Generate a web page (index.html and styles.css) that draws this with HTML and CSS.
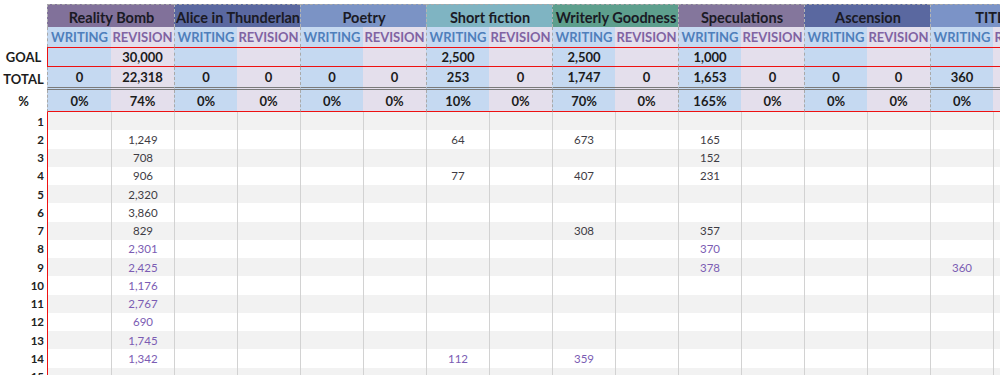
FILE: index.html
```html
<!DOCTYPE html>
<html>
<head>
<meta charset="utf-8">
<link rel="stylesheet" href="styles.css">
</head>
<body>
<div class="sheet">
  <div class="row hdr">
    <div class="lb"></div>
    <div class="c grp p-rb">Reality Bomb</div>
    <div class="c grp p-al">Alice in Thunderland</div>
    <div class="c grp p-po">Poetry</div>
    <div class="c grp p-sf">Short fiction</div>
    <div class="c grp p-wg">Writerly Goodness</div>
    <div class="c grp p-sp">Speculations</div>
    <div class="c grp p-as">Ascension</div>
    <div class="c grp p-ti">TITLE</div>
  </div>
  <div class="row sub">
    <div class="lb"></div>
    <div class="c w">WRITING</div><div class="c r">REVISION</div>
    <div class="c w">WRITING</div><div class="c r">REVISION</div>
    <div class="c w">WRITING</div><div class="c r">REVISION</div>
    <div class="c w">WRITING</div><div class="c r">REVISION</div>
    <div class="c w">WRITING</div><div class="c r">REVISION</div>
    <div class="c w">WRITING</div><div class="c r">REVISION</div>
    <div class="c w">WRITING</div><div class="c r">REVISION</div>
    <div class="c w">WRITING</div><div class="c r">REVISION</div>
  </div>
  <div class="row goal">
    <div class="lb">GOAL</div>
    <div class="c w"></div><div class="c r">30,000</div>
    <div class="c w"></div><div class="c r"></div>
    <div class="c w"></div><div class="c r"></div>
    <div class="c w">2,500</div><div class="c r"></div>
    <div class="c w">2,500</div><div class="c r"></div>
    <div class="c w">1,000</div><div class="c r"></div>
    <div class="c w"></div><div class="c r"></div>
    <div class="c w"></div><div class="c r"></div>
  </div>
  <div class="row total">
    <div class="lb">TOTAL</div>
    <div class="c w">0</div><div class="c r">22,318</div>
    <div class="c w">0</div><div class="c r">0</div>
    <div class="c w">0</div><div class="c r">0</div>
    <div class="c w">253</div><div class="c r">0</div>
    <div class="c w">1,747</div><div class="c r">0</div>
    <div class="c w">1,653</div><div class="c r">0</div>
    <div class="c w">0</div><div class="c r">0</div>
    <div class="c w">360</div><div class="c r">0</div>
  </div>
  <div class="row pct">
    <div class="lb">%</div>
    <div class="c w">0%</div><div class="c r">74%</div>
    <div class="c w">0%</div><div class="c r">0%</div>
    <div class="c w">0%</div><div class="c r">0%</div>
    <div class="c w">10%</div><div class="c r">0%</div>
    <div class="c w">70%</div><div class="c r">0%</div>
    <div class="c w">165%</div><div class="c r">0%</div>
    <div class="c w">0%</div><div class="c r">0%</div>
    <div class="c w">0%</div><div class="c r">0%</div>
  </div>

  <div class="body">
    <div class="row br">
      <div class="lb">1</div>
      <div class="c"></div><div class="c"></div><div class="c"></div><div class="c"></div><div class="c"></div><div class="c"></div><div class="c"></div><div class="c"></div>
      <div class="c"></div><div class="c"></div><div class="c"></div><div class="c"></div><div class="c"></div><div class="c"></div><div class="c"></div><div class="c"></div>
    </div>
    <div class="row br">
      <div class="lb">2</div>
      <div class="c"></div><div class="c">1,249</div><div class="c"></div><div class="c"></div><div class="c"></div><div class="c"></div><div class="c">64</div><div class="c"></div>
      <div class="c">673</div><div class="c"></div><div class="c">165</div><div class="c"></div><div class="c"></div><div class="c"></div><div class="c"></div><div class="c"></div>
    </div>
    <div class="row br">
      <div class="lb">3</div>
      <div class="c"></div><div class="c">708</div><div class="c"></div><div class="c"></div><div class="c"></div><div class="c"></div><div class="c"></div><div class="c"></div>
      <div class="c"></div><div class="c"></div><div class="c">152</div><div class="c"></div><div class="c"></div><div class="c"></div><div class="c"></div><div class="c"></div>
    </div>
    <div class="row br">
      <div class="lb">4</div>
      <div class="c"></div><div class="c">906</div><div class="c"></div><div class="c"></div><div class="c"></div><div class="c"></div><div class="c">77</div><div class="c"></div>
      <div class="c">407</div><div class="c"></div><div class="c">231</div><div class="c"></div><div class="c"></div><div class="c"></div><div class="c"></div><div class="c"></div>
    </div>
    <div class="row br">
      <div class="lb">5</div>
      <div class="c"></div><div class="c">2,320</div><div class="c"></div><div class="c"></div><div class="c"></div><div class="c"></div><div class="c"></div><div class="c"></div>
      <div class="c"></div><div class="c"></div><div class="c"></div><div class="c"></div><div class="c"></div><div class="c"></div><div class="c"></div><div class="c"></div>
    </div>
    <div class="row br">
      <div class="lb">6</div>
      <div class="c"></div><div class="c">3,860</div><div class="c"></div><div class="c"></div><div class="c"></div><div class="c"></div><div class="c"></div><div class="c"></div>
      <div class="c"></div><div class="c"></div><div class="c"></div><div class="c"></div><div class="c"></div><div class="c"></div><div class="c"></div><div class="c"></div>
    </div>
    <div class="row br">
      <div class="lb">7</div>
      <div class="c"></div><div class="c">829</div><div class="c"></div><div class="c"></div><div class="c"></div><div class="c"></div><div class="c"></div><div class="c"></div>
      <div class="c">308</div><div class="c"></div><div class="c">357</div><div class="c"></div><div class="c"></div><div class="c"></div><div class="c"></div><div class="c"></div>
    </div>
    <div class="row br pur">
      <div class="lb">8</div>
      <div class="c"></div><div class="c">2,301</div><div class="c"></div><div class="c"></div><div class="c"></div><div class="c"></div><div class="c"></div><div class="c"></div>
      <div class="c"></div><div class="c"></div><div class="c">370</div><div class="c"></div><div class="c"></div><div class="c"></div><div class="c"></div><div class="c"></div>
    </div>
    <div class="row br pur">
      <div class="lb">9</div>
      <div class="c"></div><div class="c">2,425</div><div class="c"></div><div class="c"></div><div class="c"></div><div class="c"></div><div class="c"></div><div class="c"></div>
      <div class="c"></div><div class="c"></div><div class="c">378</div><div class="c"></div><div class="c"></div><div class="c"></div><div class="c">360</div><div class="c"></div>
    </div>
    <div class="row br pur">
      <div class="lb">10</div>
      <div class="c"></div><div class="c">1,176</div><div class="c"></div><div class="c"></div><div class="c"></div><div class="c"></div><div class="c"></div><div class="c"></div>
      <div class="c"></div><div class="c"></div><div class="c"></div><div class="c"></div><div class="c"></div><div class="c"></div><div class="c"></div><div class="c"></div>
    </div>
    <div class="row br pur">
      <div class="lb">11</div>
      <div class="c"></div><div class="c">2,767</div><div class="c"></div><div class="c"></div><div class="c"></div><div class="c"></div><div class="c"></div><div class="c"></div>
      <div class="c"></div><div class="c"></div><div class="c"></div><div class="c"></div><div class="c"></div><div class="c"></div><div class="c"></div><div class="c"></div>
    </div>
    <div class="row br pur">
      <div class="lb">12</div>
      <div class="c"></div><div class="c">690</div><div class="c"></div><div class="c"></div><div class="c"></div><div class="c"></div><div class="c"></div><div class="c"></div>
      <div class="c"></div><div class="c"></div><div class="c"></div><div class="c"></div><div class="c"></div><div class="c"></div><div class="c"></div><div class="c"></div>
    </div>
    <div class="row br pur">
      <div class="lb">13</div>
      <div class="c"></div><div class="c">1,745</div><div class="c"></div><div class="c"></div><div class="c"></div><div class="c"></div><div class="c"></div><div class="c"></div>
      <div class="c"></div><div class="c"></div><div class="c"></div><div class="c"></div><div class="c"></div><div class="c"></div><div class="c"></div><div class="c"></div>
    </div>
    <div class="row br pur">
      <div class="lb">14</div>
      <div class="c"></div><div class="c">1,342</div><div class="c"></div><div class="c"></div><div class="c"></div><div class="c"></div><div class="c">112</div><div class="c"></div>
      <div class="c">359</div><div class="c"></div><div class="c"></div><div class="c"></div><div class="c"></div><div class="c"></div><div class="c"></div><div class="c"></div>
    </div>
    <div class="row br pur">
      <div class="lb">15</div>
      <div class="c"></div><div class="c"></div><div class="c"></div><div class="c"></div><div class="c"></div><div class="c"></div><div class="c"></div><div class="c"></div>
      <div class="c"></div><div class="c"></div><div class="c"></div><div class="c"></div><div class="c"></div><div class="c"></div><div class="c"></div><div class="c"></div>
    </div>
  </div>
</div>
</body>
</html>
```

FILE: styles.css
```css
html, body {
  margin: 0;
  padding: 0;
  background: #ffffff;
  overflow: hidden;
  height: 375px;
}

.sheet {
  font-family: Lato, "Liberation Sans", sans-serif;
  color: #1c1c1c;
  padding-top: 4px;
  width: 1056px;
}

.row {
  display: grid;
  grid-template-columns: 47px 64px repeat(15, 63px);
}

.c, .lb {
  box-sizing: border-box;
  display: flex;
  align-items: center;
  justify-content: center;
  overflow: hidden;
  white-space: nowrap;
}

.lb {
  background: #ffffff;
  font-weight: bold;
  font-size: 13px;
  color: #1c1c1c;
}

/* project header row */
.hdr { height: 23px; }
.hdr .grp {
  grid-column: span 2;
  justify-content: safe center;
  font-weight: bold;
  font-size: 14.5px;
  color: #1a1a24;
  border-top: 1px dashed #a9a9a9;
  border-left: 1px dashed #b4b4b4;
  padding: 2px 0 0 1px;
}
.p-rb { background: #81719a; }
.p-al { background: #5a68a0; }
.p-po { background: #7b93c5; }
.p-sf { background: #7fb4c2; }
.p-wg { background: #5d9f8d; }
.p-sp { background: #84769c; }
.p-as { background: #5a68a0; }
.p-ti { background: #7b93c7; }

/* shared band rows */
.sub, .goal, .total, .pct { font-weight: bold; }
.w { background: #c5d9f1; border-left: 1px dashed #a9a9a9; }
.r { background: #e4dfec; }

.sub { height: 20px; font-size: 13px; }
.sub .w { color: #4f7fbc; }
.sub .r { color: #8063a3; }

.goal { height: 20px; font-size: 13px; }
.goal .c {
  border-top: 1px solid #ee1111;
  border-bottom: 1px solid #ee1111;
}
.goal .c:nth-child(2) { border-left: 1px solid #ee1111; }

.total { height: 23px; font-size: 13px; }
.total .c {
  border-bottom: 3px double #7a7a7a;
}

.pct { height: 22px; font-size: 13px; }
.pct .c {
  border-bottom: 1px solid #ee1111;
}

/* body */
.br {
  height: 18.25px;
  font-size: 11.5px;
  color: #3e3c44;
}
.br .lb {
  justify-content: flex-end;
  padding-right: 3px;
  font-size: 11.5px;
  color: #222222;
}
.br .c {
  border-left: 1px solid #d2d2d2;
  background: #ffffff;
}
.br:nth-child(odd) .c { background: #f2f2f2; }
.br .c:nth-child(2) { border-left: 1px solid #ee1111; }
.pur { color: #7b5cb3; }
```
